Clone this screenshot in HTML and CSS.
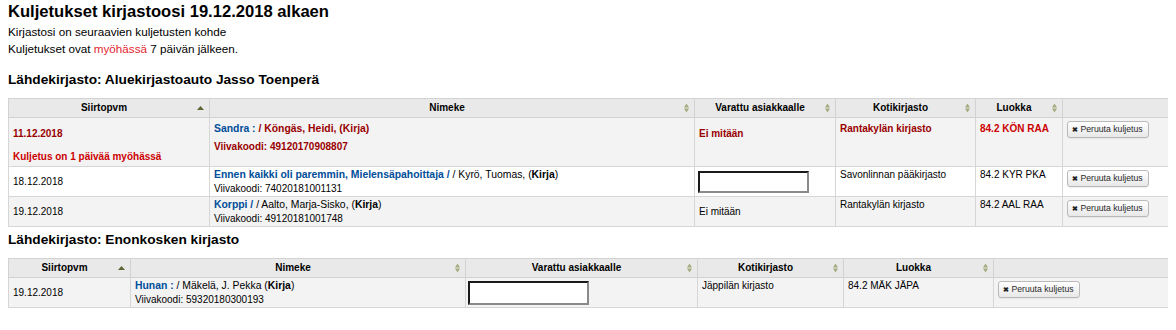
FILE: index.html
```html
<!DOCTYPE html>
<html lang="fi">
<head>
    <meta charset="UTF-8">
    <title>Kuljetukset kirjastoosi</title>
    <link rel="stylesheet" href="styles.css">
</head>
<body>
    <h1 class="page-title">Kuljetukset kirjastoosi 19.12.2018 alkaen</h1>
    <p class="note">Kirjastosi on seuraavien kuljetusten kohde</p>
    <p class="note">Kuljetukset ovat <span class="late-word">myöhässä</span> 7 päivän jälkeen.</p>

    <h3 class="source">Lähdekirjasto: Aluekirjastoauto Jasso Toenperä</h3>
    <table class="transfers">
        <colgroup>
            <col style="width: 201px">
            <col style="width: 485px">
            <col style="width: 141px">
            <col style="width: 140px">
            <col style="width: 87px">
            <col style="width: 106px">
        </colgroup>
        <thead>
            <tr>
                <th>Siirtopvm <svg class="sort" width="7" height="4" viewBox="0 0 7 4"><polygon points="0,4 3.5,0 7,4" fill="#5f6434"/></svg></th>
                <th>Nimeke <svg class="sort" width="5" height="9" viewBox="0 0 5 9"><polygon points="0,4 2.5,0 5,4" fill="#a5ab7e"/><polygon points="0,5 2.5,9 5,5" fill="#a5ab7e"/></svg></th>
                <th>Varattu asiakkaalle <svg class="sort" width="5" height="9" viewBox="0 0 5 9"><polygon points="0,4 2.5,0 5,4" fill="#a5ab7e"/><polygon points="0,5 2.5,9 5,5" fill="#a5ab7e"/></svg></th>
                <th>Kotikirjasto <svg class="sort" width="5" height="9" viewBox="0 0 5 9"><polygon points="0,4 2.5,0 5,4" fill="#a5ab7e"/><polygon points="0,5 2.5,9 5,5" fill="#a5ab7e"/></svg></th>
                <th>Luokka <svg class="sort" width="5" height="9" viewBox="0 0 5 9"><polygon points="0,4 2.5,0 5,4" fill="#a5ab7e"/><polygon points="0,5 2.5,9 5,5" fill="#a5ab7e"/></svg></th>
                <th class="no-sort"></th>
            </tr>
        </thead>
        <tbody>
            <tr class="late odd">
                <td class="date">11.12.2018<p class="late-msg">Kuljetus on 1 päivää myöhässä</p></td>
                <td class="title-cell">
                    <div class="title-line"><a class="title-link">Sandra :</a> / Köngäs, Heidi, (Kirja)</div>
                    <div class="barcode">Viivakoodi: 49120170908807</div>
                </td>
                <td class="reserved">Ei mitään</td>
                <td>Rantakylän kirjasto</td>
                <td class="callnum">84.2 KÖN RAA</td>
                <td class="action"><button class="cancel-btn"><span class="x">✖</span> Peruuta kuljetus</button></td>
            </tr>
            <tr>
                <td class="date">18.12.2018</td>
                <td class="title-cell">
                    <div class="title-line"><a class="title-link">Ennen kaikki oli paremmin, Mielensäpahoittaja /</a> / Kyrö, Tuomas, (<b>Kirja</b>)</div>
                    <div>Viivakoodi: 74020181001131</div>
                </td>
                <td class="reserved"><input class="patron-box" type="text"></td>
                <td>Savonlinnan pääkirjasto</td>
                <td>84.2 KYR PKA</td>
                <td class="action"><button class="cancel-btn"><span class="x">✖</span> Peruuta kuljetus</button></td>
            </tr>
            <tr class="odd">
                <td class="date">19.12.2018</td>
                <td class="title-cell">
                    <div class="title-line"><a class="title-link">Korppi /</a> / Aalto, Marja-Sisko, (<b>Kirja</b>)</div>
                    <div>Viivakoodi: 49120181001748</div>
                </td>
                <td class="reserved">Ei mitään</td>
                <td>Rantakylän kirjasto</td>
                <td>84.2 AAL RAA</td>
                <td class="action"><button class="cancel-btn"><span class="x">✖</span> Peruuta kuljetus</button></td>
            </tr>
        </tbody>
    </table>

    <h3 class="source second">Lähdekirjasto: Enonkosken kirjasto</h3>
    <table class="transfers">
        <colgroup>
            <col style="width: 122px">
            <col style="width: 335px">
            <col style="width: 232px">
            <col style="width: 146px">
            <col style="width: 150px">
            <col style="width: 175px">
        </colgroup>
        <thead>
            <tr>
                <th>Siirtopvm <svg class="sort" width="7" height="4" viewBox="0 0 7 4"><polygon points="0,4 3.5,0 7,4" fill="#5f6434"/></svg></th>
                <th>Nimeke <svg class="sort" width="5" height="9" viewBox="0 0 5 9"><polygon points="0,4 2.5,0 5,4" fill="#a5ab7e"/><polygon points="0,5 2.5,9 5,5" fill="#a5ab7e"/></svg></th>
                <th>Varattu asiakkaalle <svg class="sort" width="5" height="9" viewBox="0 0 5 9"><polygon points="0,4 2.5,0 5,4" fill="#a5ab7e"/><polygon points="0,5 2.5,9 5,5" fill="#a5ab7e"/></svg></th>
                <th>Kotikirjasto <svg class="sort" width="5" height="9" viewBox="0 0 5 9"><polygon points="0,4 2.5,0 5,4" fill="#a5ab7e"/><polygon points="0,5 2.5,9 5,5" fill="#a5ab7e"/></svg></th>
                <th>Luokka <svg class="sort" width="5" height="9" viewBox="0 0 5 9"><polygon points="0,4 2.5,0 5,4" fill="#a5ab7e"/><polygon points="0,5 2.5,9 5,5" fill="#a5ab7e"/></svg></th>
                <th class="no-sort"></th>
            </tr>
        </thead>
        <tbody>
            <tr class="odd">
                <td class="date">19.12.2018</td>
                <td class="title-cell">
                    <div class="title-line"><a class="title-link">Hunan :</a> / Mäkelä, J. Pekka (<b>Kirja</b>)</div>
                    <div>Viivakoodi: 59320180300193</div>
                </td>
                <td class="reserved"><input class="patron-box wide" type="text"></td>
                <td>Jäppilän kirjasto</td>
                <td>84.2 MÄK JÄPA</td>
                <td class="action"><button class="cancel-btn"><span class="x">✖</span> Peruuta kuljetus</button></td>
            </tr>
        </tbody>
    </table>
</body>
</html>
```

FILE: styles.css
```css
body {
    margin: 0 8px;
    font-family: "Liberation Sans", Arial, sans-serif;
    color: #000;
    background: #fff;
}

.page-title {
    font-size: 16.6px;
    line-height: 20px;
    margin: 2px 0 0;
}

.note {
    font-size: 11.7px;
    line-height: 14px;
    margin: 3px 0 0;
}

.late-word {
    color: #e3262f;
}

.source {
    font-size: 13.7px;
    line-height: 18px;
    margin: 15px 0 9px;
}

.source.second {
    margin: 4px 0 9px;
}

.transfers {
    width: 100%;
    table-layout: fixed;
    border-collapse: collapse;
    font-size: 10px;
    line-height: 14px;
}

.transfers th {
    position: relative;
    background: #e9e9e9;
    border: 1px solid #d2d2d2;
    padding: 2px 14px 2px 4px;
    font-weight: bold;
    text-align: center;
}

.transfers th.no-sort {
    padding: 2px 4px;
}

.sort {
    position: absolute;
    right: 5px;
    top: 50%;
    transform: translateY(-50%);
}

.transfers td {
    border: 1px solid #d6d6d6;
    padding: 1px 4px 0;
    vertical-align: top;
    text-align: left;
}

.transfers tr.odd td {
    background: #f3f3f3;
}

.transfers td.date,
.transfers td.reserved {
    vertical-align: middle;
}

.transfers td.action {
    padding-top: 3px;
}

.title-line {
    font-size: 10.4px;
}

.title-link {
    color: #004d99;
    font-weight: bold;
    text-decoration: none;
}

/* late row */
.late td {
    color: #990000;
    font-weight: bold;
    padding-top: 4px;
}

.late td.date,
.late td.reserved {
    vertical-align: top;
    padding-top: 9px;
    padding-bottom: 2px;
}

.late td.callnum {
    color: #cc0000;
}

.late-msg {
    margin: 9px 0 0;
    color: #cc0000;
}

.late .barcode {
    margin-top: 4px;
}

.late td.action {
    padding-top: 3px;
}

.patron-box {
    display: block;
    width: 111px;
    height: 22px;
    box-sizing: border-box;
    margin: 0 0 0 -1px;
    border: 2px inset #7a7a7a;
    border-color: #6f6f6f #8a8a8a #8a8a8a #6f6f6f;
    background: #fff;
}

.patron-box.wide {
    width: 121px;
    height: 24px;
    margin-left: -2px;
}

.cancel-btn {
    font-family: "Liberation Sans", Arial, sans-serif;
    font-size: 8.7px;
    line-height: 13px;
    height: 17px;
    padding: 1px 5px 1px 4px;
    border: 1px solid #b9b9b9;
    border-radius: 3px;
    background: linear-gradient(#ffffff, #e8e8e8);
    color: #2a2a2a;
    box-shadow: 0 1px 1px rgba(0, 0, 0, 0.06);
}

.cancel-btn .x {
    font-size: 7px;
    font-weight: bold;
    color: #222;
}
```
